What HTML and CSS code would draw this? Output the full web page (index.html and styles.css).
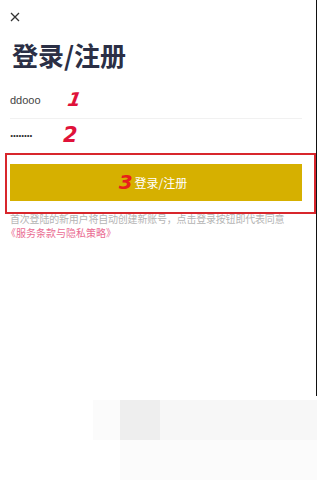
FILE: index.html
```html
<!DOCTYPE html>
<html lang="zh-CN">
<head>
    <meta charset="UTF-8">
    <title>登录/注册</title>
    <link rel="stylesheet" href="styles.css">
</head>
<body>
<div id="screen">
    <div id="frame">
        <div class="close">
            <svg width="10" height="10" viewBox="0 0 10 10"><path d="M1 1L9 9M9 1L1 9" stroke="#333" stroke-width="1.3" fill="none"/></svg>
        </div>
        <h1 class="title">登录/注册</h1>
        <div class="field field-user">
            <span class="value">ddooo</span>
            <span class="mark mark1">1</span>
        </div>
        <div class="field field-pass">
            <span class="value dots">........</span>
            <span class="mark mark2">2</span>
        </div>
        <div class="highlight">
            <div class="btn">
                <span class="mark3">3</span>登录/注册
            </div>
        </div>
        <p class="tip">首次登陆的新用户将自动创建新账号，点击登录按钮即代表同意</p>
        <p class="link">《服务条款与隐私策略》</p>
    </div>
    <!--底部灰色块-->
    <div class="bottom">
        <div class="row row1">
            <i class="b0"></i><i class="b1"></i><i class="b2"></i><i class="b3"></i>
        </div>
        <div class="row row2">
            <i class="c0"></i><i class="c1"></i>
        </div>
    </div>
</div>
</body>
</html>
```

FILE: styles.css
```css
*{
    margin:0;
    padding:0;
}
body{
    background: #fff;
    font-family: "Noto Sans CJK SC", "Noto Sans", sans-serif;
}
#screen{
    width: 317px;
    height: 480px;
    overflow: hidden;
}
#frame{
    width: 317px;
    height: 396px;
    border-right: 1.5px solid #111;
    box-sizing: border-box;
}
.close{
    height: 10px;
    padding: 12px 0 0 10px;
}
.close svg{
    display: block;
}
.title{
    margin: 18px 0 0 12px;
    font-size: 26px;
    line-height: 30px;
    font-weight: bold;
    color: #2b2f45;
}
.field{
    position: relative;
    margin: 0 14px 0 10px;
    display: flex;
    align-items: center;
    font-size: 11px;
    color: #444;
    font-family: "Liberation Sans", "Noto Sans CJK SC", sans-serif;
}
.field-user{
    margin-top: 12px;
    height: 36px;
    border-bottom: 1px solid #f1f1f1;
}
.field-pass{
    height: 34px;
}
.dots{
    font-size: 12px;
    font-weight: bold;
    color: #333;
    letter-spacing: -0.6px;
    position: relative;
    top: -3px;
}
.mark{
    position: absolute;
    color: #e0123a;
    font-family: "DejaVu Sans", sans-serif;
    font-style: italic;
    font-weight: bold;
    font-size: 19px;
}
.mark1{
    left: 58px;
    top: 6px;
    transform: skewX(-10deg);
}
.mark2{
    left: 53px;
    top: 4px;
    font-size: 21px;
}
.highlight{
    margin-left: 5px;
    width: 311px;
    height: 61px;
    border: 2px solid #d8262c;
    box-sizing: border-box;
    padding: 9px 0 0 3px;
}
.btn{
    width: 292px;
    height: 37px;
    background: #d6b000;
    color: #fff;
    font-size: 12px;
    display: flex;
    align-items: center;
    justify-content: center;
}
.mark3{
    color: #e8201a;
    font-family: "DejaVu Sans", sans-serif;
    font-style: italic;
    font-weight: bold;
    font-size: 20px;
    margin: 0 2px 0 -6px;
    position: relative;
    top: -1px;
}
.tip{
    margin: -2px 0 0 10px;
    font-size: 10px;
    line-height: 14px;
    color: #b4b4b4;
    white-space: nowrap;
    letter-spacing: -0.2px;
}
.link{
    margin-left: 6px;
    font-size: 10px;
    line-height: 14px;
    color: #ea6c92;
}
.bottom{
    padding-top: 4px;
}
.row{
    display: flex;
}
.row i{
    display: block;
}
.row1{
    height: 40px;
}
.b0{ width: 93px; background: #fff; }
.b1{ width: 27px; background: #fbfbfb; }
.b2{ width: 40px; background: #eeeeee; }
.b3{ flex: 1; background: #f7f7f7; }
.row2{
    height: 40px;
}
.c0{ width: 120px; background: #fff; }
.c1{ flex: 1; background: #fbfbfb; }
```
